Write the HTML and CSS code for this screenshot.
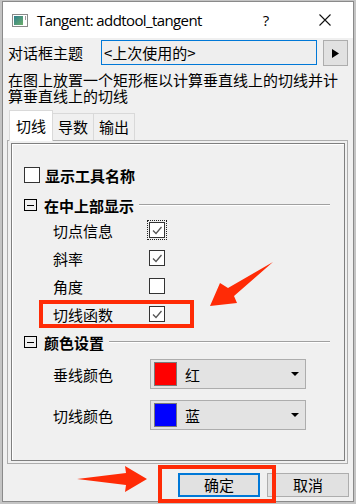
FILE: index.html
```html
<!DOCTYPE html>
<html lang="zh-CN">
<head>
  <meta charset="UTF-8">
  <title>Tangent: addtool_tangent</title>
  <link rel="stylesheet" href="styles.css">
</head>
<body>

  <div class="window">
    <div class="titlebar">
      <svg class="app-icon" width="16" height="13" viewBox="0 0 16 13">
        <defs>
          <linearGradient id="ig" x1="0" y1="0" x2="1" y2="1">
            <stop offset="0" stop-color="#2f7f8f"/>
            <stop offset="1" stop-color="#6cae6a"/>
          </linearGradient>
        </defs>
        <rect x="0.5" y="0.5" width="15" height="12" fill="#fff" stroke="#8a8a8a"/>
        <rect x="2" y="2" width="9" height="9" fill="url(#ig)"/>
        <rect x="13" y="2" width="1" height="4" fill="#9a9a9a"/>
      </svg>
      <span class="title">Tangent: addtool_tangent</span>
      <span class="help">?</span>
      <svg class="close" width="12" height="12" viewBox="0 0 12 12">
        <path d="M0.5 0.5 L11.5 11.5 M11.5 0.5 L0.5 11.5" stroke="#111" stroke-width="1.1" fill="none"/>
      </svg>
    </div>

    <div class="theme-row">
      <span class="theme-label">对话框主题</span>
      <div class="theme-combo">&lt;上次使用的&gt;</div>
      <button class="arrow-btn">
        <svg width="9" height="9" viewBox="0 0 9 9"><path d="M1 0 L8 4.5 L1 9 Z" fill="#000"/></svg>
      </button>
    </div>

    <p class="desc">在图上放置一个矩形框以计算垂直线上的切线并计算垂直线上的切线</p>

    <div class="tabs">
      <div class="tab active">切线</div>
      <div class="tab">导数</div>
      <div class="tab">输出</div>
    </div>

    <div class="tab-page">
      <div class="frame">

        <div class="main-row">
          <span class="checkbox"></span>
          <span class="bold">显示工具名称</span>
        </div>

        <div class="group-head">
          <span class="collapse"></span>
          <span class="bold">在中上部显示</span>
          <span class="rule"></span>
        </div>

        <div class="opt-row">
          <span class="opt-label">切点信息</span>
          <span class="checkbox focus"><svg width="14" height="14" viewBox="0 0 14 14"><polyline points="3,7.5 6,10.5 11.5,4" fill="none" stroke="#555" stroke-width="1.3"/></svg></span>
        </div>
        <div class="opt-row">
          <span class="opt-label">斜率</span>
          <span class="checkbox"><svg width="14" height="14" viewBox="0 0 14 14"><polyline points="3,7.5 6,10.5 11.5,4" fill="none" stroke="#555" stroke-width="1.3"/></svg></span>
        </div>
        <div class="opt-row">
          <span class="opt-label">角度</span>
          <span class="checkbox"></span>
        </div>
        <div class="opt-row">
          <span class="opt-label">切线函数</span>
          <span class="checkbox"><svg width="14" height="14" viewBox="0 0 14 14"><polyline points="3,7.5 6,10.5 11.5,4" fill="none" stroke="#555" stroke-width="1.3"/></svg></span>
        </div>

        <div class="group-head second">
          <span class="collapse"></span>
          <span class="bold">颜色设置</span>
          <span class="rule"></span>
        </div>

        <div class="color-row">
          <span class="opt-label">垂线颜色</span>
          <div class="color-combo">
            <span class="swatch red"></span>
            <span>红</span>
            <span class="caret"></span>
          </div>
        </div>
        <div class="color-row">
          <span class="opt-label">切线颜色</span>
          <div class="color-combo">
            <span class="swatch blue"></span>
            <span>蓝</span>
            <span class="caret"></span>
          </div>
        </div>

      </div>
    </div>

    <div class="buttons">
      <button class="btn default">确定</button>
      <button class="btn">取消</button>
    </div>
  </div>

  <!-- Markierungen über dem Dialog -->
  <svg class="annotations" width="356" height="504" viewBox="0 0 356 504">
    <rect x="41" y="302" width="151" height="24" fill="none" stroke="#ff2b06" stroke-width="4"/>
    <rect x="160" y="467" width="114" height="34" fill="none" stroke="#ff2b06" stroke-width="4"/>
    <polygon points="273,262 234,296 237,303 210,306 220,283 228,288" fill="#ff2b06"/>
    <polygon points="77,479 126,473 125,466 147,479 125,492 126,485" fill="#ff2b06"/>
  </svg>

</body>
</html>
```

FILE: styles.css
```css
body {
  margin: 0;
  background: #c4c4c4;
  font-family: "Noto Sans CJK SC", "Noto Sans", sans-serif;
  font-size: 15px;
  color: #000;
}

.window {
  margin: 1px 0 0 2px;
  width: 350px;
  height: 499px;
  border: 1px solid #8a8a8a;
  background: #f0f0f0;
}

/* Titelleiste */
.titlebar {
  height: 36px;
  background: #fff;
  display: flex;
  align-items: center;
  padding-left: 9px;
}

.app-icon {
  margin-right: 9px;
}

.title {
  flex: 1;
  font-family: "Open Sans", "Noto Sans", sans-serif;
  font-size: 15px;
  letter-spacing: -0.6px;
}

.help {
  width: 12px;
  text-align: center;
  margin-right: 47px;
  font-family: "Open Sans", sans-serif;
  font-size: 15px;
}

.close {
  margin-right: 22px;
}

/* Dialogthema */
.theme-row {
  display: flex;
  align-items: flex-start;
  height: 26px;
  margin-top: 2px;
  padding-left: 5px;
}

.theme-label {
  width: 93px;
  line-height: 25px;
}

.theme-combo {
  width: 212px;
  height: 23px;
  line-height: 23px;
  padding-left: 2px;
  border: 1px solid #0078d7;
  background: #eeeeee;
}

.arrow-btn {
  margin-left: 6px;
  width: 25px;
  height: 26px;
  padding: 0;
  border: 1px solid #adadad;
  background: #e1e1e1;
  display: flex;
  align-items: center;
  justify-content: center;
}

.desc {
  margin: 6px 0 0;
  padding: 0 5px;
  line-height: 16px;
}

/* Reiter */
.tabs {
  display: flex;
  align-items: flex-end;
  height: 29px;
  margin-top: 7px;
  padding-left: 6px;
}

.tab {
  height: 26px;
  line-height: 25px;
  padding: 0 5px;
  border: 1px solid #d9d9d9;
  border-bottom: none;
  background: #f0f0f0;
}

.tab + .tab {
  border-left: none;
}

.tab.active {
  height: 30px;
  line-height: 29px;
  padding: 0 6px;
  margin-bottom: -1px;
  position: relative;
  z-index: 1;
  background: #fff;
  border-color: #d9d9d9;
}

.tab-page {
  margin-left: 4px;
  width: 334px;
  height: 318px;
  padding: 2px 2px 2px 3px;
  border: 1px solid #adadad;
}

.frame {
  height: 316px;
  border: 1px solid #7f7f7f;
  box-shadow: inset 1px 1px 0 #fff;
}

.bold {
  font-weight: bold;
}

.main-row {
  display: flex;
  align-items: center;
  height: 24px;
  margin-top: 19px;
  padding-left: 12px;
  gap: 5px;
}

.checkbox {
  width: 14px;
  height: 14px;
  border: 1px solid #333;
  background: #fff;
  display: inline-flex;
}

.checkbox.focus {
  outline: 1px dotted #222;
  outline-offset: 1px;
}

.group-head {
  display: flex;
  align-items: center;
  height: 20px;
  margin-top: 8px;
  padding-left: 12px;
  padding-right: 14px;
}

.group-head.second {
  margin-top: 4px;
}

.collapse {
  width: 11px;
  height: 10px;
  border: 1px solid #000;
  margin-right: 7px;
  display: flex;
  align-items: center;
  justify-content: center;
}

.collapse::before {
  content: "";
  width: 7px;
  height: 1px;
  background: #000;
}

.rule {
  flex: 1;
  height: 1px;
  margin-left: 5px;
  background: #a0a0a0;
  border-bottom: 1px solid #fff;
}

.opt-row {
  display: flex;
  align-items: center;
  height: 28px;
  padding-left: 41px;
}

.group-head + .opt-row {
  margin-top: 1px;
}

.opt-label {
  width: 96px;
}

.color-row {
  display: flex;
  align-items: center;
  height: 30px;
  margin-top: 11px;
  padding-left: 41px;
}

.group-head + .color-row {
  margin-top: 7px;
}

.color-row .opt-label {
  width: 97px;
}

.color-combo {
  width: 154px;
  height: 28px;
  border: 1px solid #adadad;
  background: #e3e3e3;
  display: flex;
  align-items: center;
}

.swatch {
  width: 21px;
  height: 22px;
  margin: 0 8px 0 3px;
  border: 1px solid #7a7a7a;
}

.swatch.red {
  background: #ff0000;
}

.swatch.blue {
  background: #0000ff;
}

.caret {
  margin-left: auto;
  margin-right: 6px;
  width: 0;
  height: 0;
  border-left: 4px solid transparent;
  border-right: 4px solid transparent;
  border-top: 4px solid #000;
}

/* Knöpfe */
.buttons {
  display: flex;
  justify-content: flex-end;
  gap: 7px;
  margin-top: 9px;
  padding-right: 4px;
}

.btn {
  width: 82px;
  height: 24px;
  padding: 0;
  font-family: "Noto Sans CJK SC", sans-serif;
  font-size: 15px;
  line-height: 20px;
  border: 1px solid #adadad;
  background: #e1e1e1;
  color: #000;
}

.btn.default {
  border: 2px solid #0078d7;
}

.annotations {
  position: absolute;
  top: 0;
  left: 0;
  pointer-events: none;
}
```
